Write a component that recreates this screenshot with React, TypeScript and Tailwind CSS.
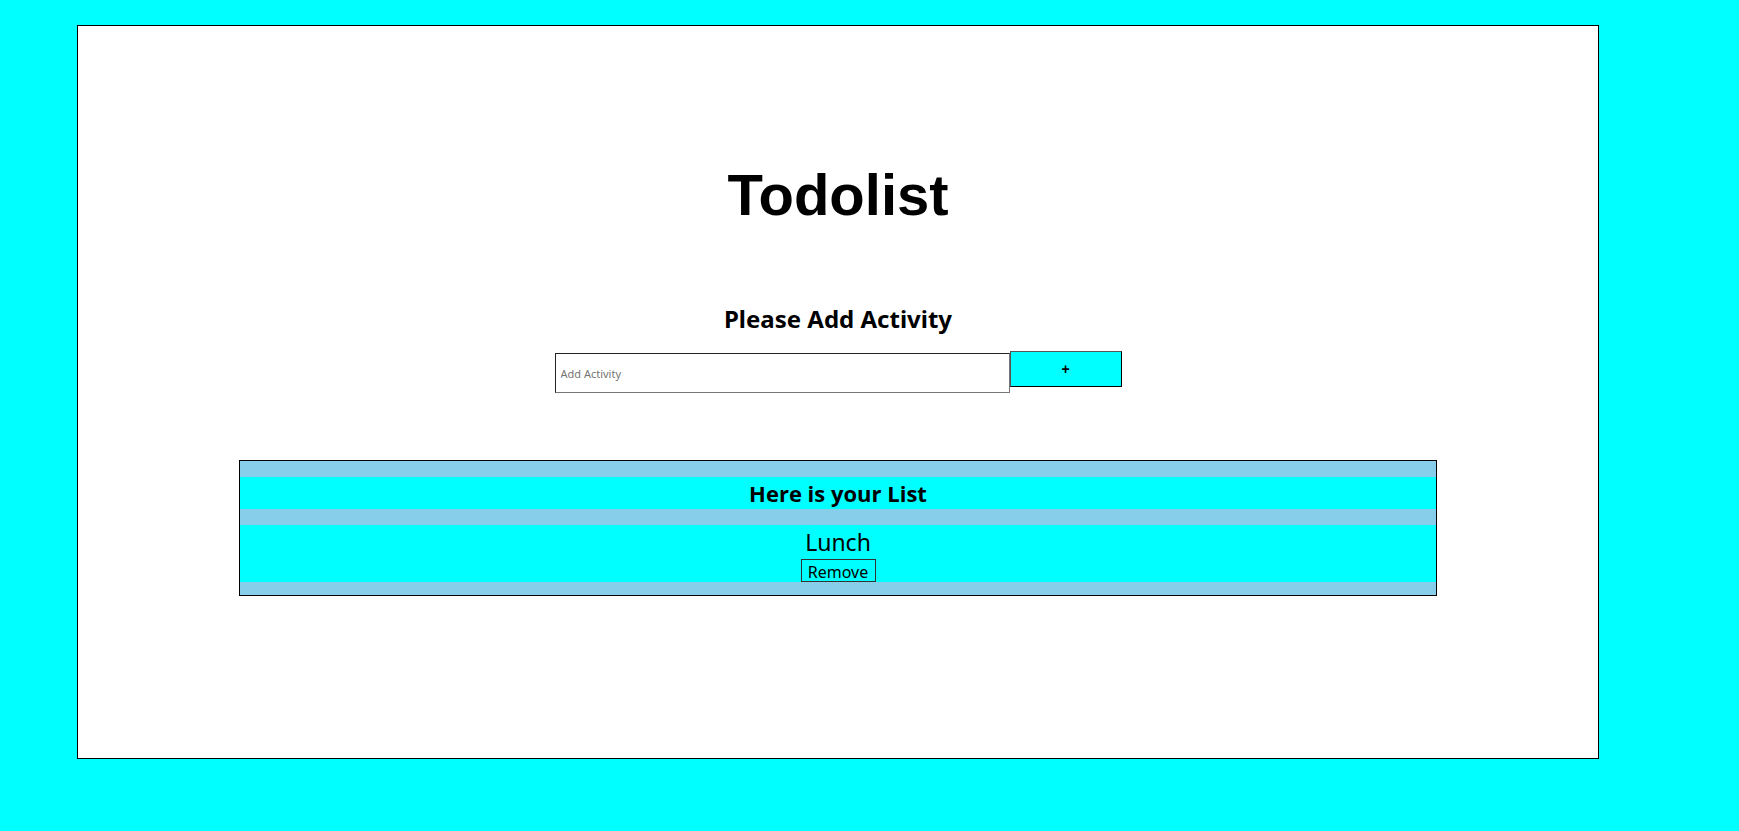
import React, { useState } from 'react';

const comic = "font-['Comic_Sans_MS','Noto_Sans',sans-serif]";

const App = () => {
  const [text, setText] = useState('');
  const [items, setItems] = useState<string[]>(['Lunch']);

  const add = () => {
    if (!text.trim()) return;
    setItems([...items, text.trim()]);
    setText('');
  };

  return (
    <div className="min-h-screen bg-[#00ffff] pt-[25px] pl-[77px]">
      <div className="w-[1522px] h-[734px] border border-black bg-white flex flex-col items-center">
        <h1 className="mt-[140px] text-[58px] leading-none font-bold text-black font-['Liberation_Sans',Arial,sans-serif]">
          Todolist
        </h1>

        <h2 className={`mt-[83px] text-[24px] leading-none font-bold text-black ${comic}`}>
          Please Add Activity
        </h2>

        <div className="mt-[20px] flex items-start">
          <input
            value={text}
            onChange={(e) => setText(e.target.value)}
            placeholder="Add Activity"
            className={`mt-[2px] w-[455px] h-[40px] px-[5px] bg-white text-[11px] text-black placeholder:text-[#757575] border border-t-[#222] border-l-[#222] border-r-[#777] border-b-[#777] outline-none ${comic}`}
          />
          <button
            onClick={add}
            className="w-[112px] h-[36px] bg-[#00ffff] border border-t-[#555] border-l-[#555] border-r-black border-b-black text-[14px] font-bold text-black font-['Liberation_Sans',Arial,sans-serif]"
          >
            +
          </button>
        </div>

        <div className="mt-[67px] w-[1198px] border border-black bg-[#87ceeb] pt-[16px] pb-[13px] flex flex-col gap-[16px]">
          <div className="h-[32px] bg-[#00ffff] flex items-center justify-center">
            <span className="text-[22px] font-bold text-black font-['Open_Sans','Noto_Sans',sans-serif]">
              Here is your List
            </span>
          </div>
          {items.map((item, i) => (
            <div key={i} className="h-[57px] bg-[#00ffff] flex flex-col items-center justify-end">
              <span className={`text-[23px] leading-[34px] text-black ${comic}`}>{item}</span>
              <button
                onClick={() => setItems(items.filter((_, j) => j !== i))}
                className={`w-[75px] h-[23px] border border-[#333] text-[16px] leading-[24px] text-black overflow-hidden ${comic}`}
              >
                Remove
              </button>
            </div>
          ))}
        </div>
      </div>
    </div>
  );
};

export default App;
